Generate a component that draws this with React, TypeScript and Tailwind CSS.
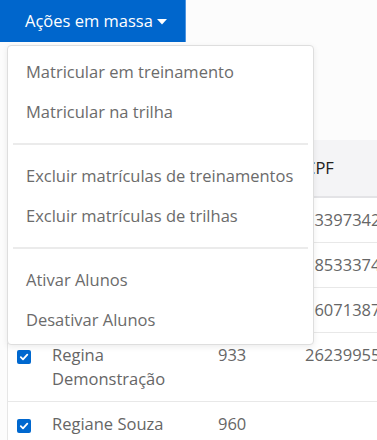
import React from 'react';

const rows = [
  { name: 'Aluno Um', id: '901', cpf: '03397342115' },
  { name: 'Aluno Dois', id: '912', cpf: '08533374092' },
  { name: 'Aluno Três', id: '920', cpf: '06071387354' },
  { name: 'Regina Demonstração', id: '933', cpf: '26239955810' },
  { name: 'Regiane Souza', id: '960', cpf: '' },
];

const actions = [
  ['Matricular em treinamento', 'Matricular na trilha'],
  ['Excluir matrículas de treinamentos', 'Excluir matrículas de trilhas'],
  ['Ativar Alunos', 'Desativar Alunos'],
];

function Check() {
  return (
    <span className="flex h-[14px] w-[14px] items-center justify-center rounded-[2px] bg-[#0068cf]">
      <svg width="10" height="10" viewBox="0 0 10 10" fill="none">
        <path d="M1.8 5.2 L4 7.3 L8.3 2.6" stroke="white" strokeWidth="1.8" strokeLinecap="round" strokeLinejoin="round" />
      </svg>
    </span>
  );
}

export default function App() {
  return (
    <div className="relative h-[440px] w-[377px] overflow-hidden bg-[#fcfcfc] font-['Open_Sans',sans-serif]">
      {/* Bulk action button */}
      <button className="flex h-[42px] w-[186px] items-center gap-[4px] border-r border-[#4d94e0] bg-[#0066cc] pl-[25px] text-[16.5px] leading-6 text-white">
        Ações em massa
        <svg width="10" height="6" viewBox="0 0 10 6" className="mt-[2px]">
          <path d="M0 0 H10 L5 5.5 Z" fill="white" />
        </svg>
      </button>

      {/* Table */}
      <div className="mt-[98px] ml-[7px] border-l border-[#e6e6e6] bg-white">
        <table className="w-[440px] table-fixed border-collapse text-left text-[16.5px] leading-6">
          <colgroup>
            <col className="w-[34px]" />
            <col className="w-[166px]" />
            <col className="w-[87px]" />
            <col />
          </colgroup>
          <thead>
            <tr className="h-[57px] border-b-2 border-[#e3e3e6] bg-[#f4f4f6]">
              <th />
              <th className="pl-[10px] font-normal text-[#222]">Nome</th>
              <th className="pl-[10px] font-normal text-[#222]">ID</th>
              <th className="pl-[10px] font-normal text-[#222]">CPF</th>
            </tr>
          </thead>
          <tbody className="text-[#666]">
            {rows.map((r) => (
              <tr key={r.name} className="border-b border-[#e8e8e8] align-top">
                <td className="pt-[17px] pl-[9px]">
                  <Check />
                </td>
                <td className="py-[10px] pl-[10px]">{r.name}</td>
                <td className="py-[10px] pl-[10px]">{r.id}</td>
                <td className="whitespace-nowrap py-[10px] pl-[10px]">{r.cpf}</td>
              </tr>
            ))}
          </tbody>
        </table>
      </div>

      {/* Dropdown menu */}
      <div className="absolute left-[7px] top-[45px] w-[307px] rounded-[4px] border border-[#dedede] bg-white pt-[6px] pb-[4px] shadow-[0_2px_6px_rgba(0,0,0,0.08)]">
        {actions.map((group, i) => (
          <div key={i}>
            {i > 0 && <div className="mx-[5px] mt-[11px] mb-[11px] h-[2px] bg-[#ebebeb]" />}
            {group.map((a) => (
              <div key={a} className="whitespace-nowrap px-[18px] py-2 text-[16.5px] leading-6 text-[#6b6b6b]">
                {a}
              </div>
            ))}
          </div>
        ))}
      </div>
    </div>
  );
}
